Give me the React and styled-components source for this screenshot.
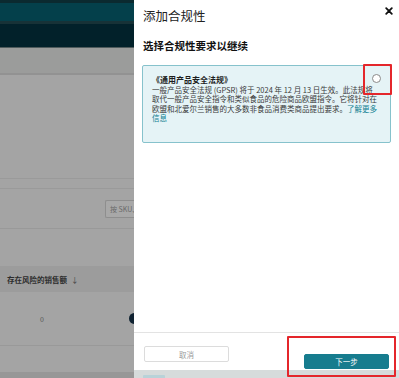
import React from 'react';
import styled, { createGlobalStyle } from 'styled-components';

const GlobalStyle = createGlobalStyle`
  html, body {
    margin: 0;
    padding: 0;
    background: #a4a4a4;
  }
  body {
    font-family: "Noto Sans CJK SC", "Noto Sans", sans-serif;
    -webkit-font-smoothing: antialiased;
  }
`;

const Page = styled.div`
  display: grid;
  grid-template-columns: 134px 1fr;
  width: 399px;
  height: 378px;
  overflow: hidden;
`;

// dimmed page behind the drawer
const Backdrop = styled.div`
  display: flex;
  flex-direction: column;
  overflow: hidden;
  background: #a4a4a4;
`;

const Band = styled.div`
  flex: none;
  height: ${p => p.h}px;
  background: ${p => p.bg || '#a4a4a4'};
  border-bottom: ${p => (p.line ? `${p.lineW || 1}px solid ${p.line}` : 'none')};
`;

const SearchRow = styled.div`
  flex: none;
  height: 39px;
  display: flex;
  align-items: center;
  padding-left: 105px;
  border-bottom: 1px solid #999;
`;

const SearchBox = styled.div`
  flex: none;
  width: 29px;
  height: 16px;
  border: 1px solid #8e8e8e;
  border-right: none;
  border-radius: 2px 0 0 2px;
  background: #a8a8a8;
  font-size: 7px;
  line-height: 16px;
  color: #6a6a6a;
  padding-left: 4px;
  white-space: nowrap;
  overflow: hidden;
`;

const TableHead = styled.div`
  flex: none;
  height: 26px;
  display: flex;
  align-items: center;
  padding-left: 7px;
  background: #9c9c9c;
  font-size: 7.5px;
  font-weight: 700;
  color: #2c2c2c;
  white-space: nowrap;
`;

const SortArrow = styled.span`
  margin-left: 4px;
  font-weight: 400;
  color: #444;
`;

const TableRow = styled.div`
  flex: none;
  height: 53px;
  display: flex;
  align-items: center;
  justify-content: space-between;
  padding-left: 40px;
  border-bottom: 1px solid #999;
  font-size: 7px;
  color: #555;
`;

const Dot = styled.span`
  width: 11px;
  height: 11px;
  border-radius: 50%;
  background: #0f2231;
  margin-right: -6px;
`;

const Side = styled.div`
  display: flex;
  flex-direction: column;
`;

const Drawer = styled.div`
  height: 370px;
  display: flex;
  flex-direction: column;
  background: #fff;
`;

const DrawerBody = styled.div`
  flex: 1;
  padding: 8px 8px 0 8px;
`;

const Header = styled.div`
  display: flex;
  justify-content: space-between;
  align-items: flex-start;
  padding-left: 1px;
`;

const Title = styled.h2`
  margin: 0;
  font-size: 12.5px;
  line-height: 15px;
  font-weight: 400;
  color: #222;
`;

const CloseButton = styled.button`
  border: none;
  background: none;
  padding: 0;
  margin: 0;
  width: 8px;
  height: 8px;
  margin-top: -1px;
  margin-right: -2px;
  display: flex;
  cursor: pointer;
`;

const Subtitle = styled.h3`
  margin: 16px 0 0 1px;
  font-size: 10.5px;
  line-height: 13px;
  font-weight: 700;
  color: #111;
`;

const Card = styled.div`
  margin-top: 13px;
  min-height: 78px;
  box-sizing: border-box;
  display: grid;
  grid-template-columns: 1fr auto;
  grid-template-areas:
    'title radio'
    'body body';
  align-content: start;
  padding: 9px 9px 8px 9px;
  background: #e5f3f6;
  border: 1px solid #86c2cc;
  border-radius: 2px;
`;

const CardTitle = styled.div`
  grid-area: title;
  font-size: 8px;
  line-height: 10px;
  font-weight: 700;
  color: #1e1e1e;
`;

const CardText = styled.div`
  grid-area: body;
  font-size: 7.5px;
  color: #3a3a3a;
  white-space: nowrap;
`;

const TextLine = styled.div`
  height: 9.4px;
  line-height: 9.4px;
`;

const Link = styled.a`
  display: inline-block;
  height: 9.4px;
  line-height: 9.4px;
  color: #0f7f92;
  text-decoration: none;
`;

const Annotated = styled.div`
  position: relative;
  &::after {
    content: '';
    position: absolute;
    top: ${p => p.t}px;
    right: ${p => p.r}px;
    bottom: ${p => p.b}px;
    left: ${p => p.l}px;
    border: 2px solid #e4262b;
    border-radius: 1px;
    pointer-events: none;
  }
`;

const RadioSlot = styled(Annotated)`
  grid-area: radio;
  margin-top: -1.5px;
  margin-right: 0.5px;
`;

const Radio = styled.span`
  display: block;
  width: 9px;
  height: 9px;
  box-sizing: border-box;
  border-radius: 50%;
  border: 1px solid #8a8a8a;
  background: #fff;
`;

const Footer = styled.div`
  flex: none;
  display: flex;
  justify-content: space-between;
  align-items: flex-start;
  height: 38px;
  box-sizing: border-box;
  padding: 13px 10px 0 10px;
  border-top: 1px solid #e3e3e3;
`;

const Button = styled.button`
  width: 85px;
  height: ${p => (p.primary ? 15 : 16)}px;
  margin-top: ${p => (p.primary ? 1 : 0)}px;
  padding: 0;
  box-sizing: border-box;
  border-radius: 2px;
  border: 1px solid ${p => (p.primary ? '#167c8e' : '#dcdcdc')};
  background: ${p => (p.primary ? '#167c8e' : '#fff')};
  color: ${p => (p.primary ? '#fff' : '#9a9a9a')};
  font-family: inherit;
  font-size: 7.5px;
  line-height: 13px;
  cursor: pointer;
`;

const PageStrip = styled.div`
  flex: none;
  height: 8px;
  background: #d6dbdb;
  padding: 5px 0 0 9px;
  box-sizing: border-box;
  overflow: hidden;
`;

const StripMark = styled.span`
  display: block;
  width: 22px;
  height: 4px;
  border-radius: 1px;
  background: #b9d2d8;
`;

export default function App() {
  return (
    <>
      <GlobalStyle />
      <Page>
        <Backdrop>
          <Band h={3} bg="#0b2a30" />
          <Band h={18} bg="#04404b" />
          <Band h={3} bg="#173237" />
          <Band h={23} bg="#02212a" line="#4f5b5c" />
          <Band h={25} bg="#9b9c9b" line="#929292" lineW={2} />
          <Band h={103} line="#9a9a9a" />
          <Band h={9} line="#9a9a9a" />
          <SearchRow>
            <SearchBox>按 SKU、</SearchBox>
          </SearchRow>
          <Band h={37} />
          <TableHead>
            存在风险的销售额<SortArrow>↓</SortArrow>
          </TableHead>
          <TableRow>
            <span>0</span>
            <Dot />
          </TableRow>
          <Band h={26} />
          <Band h={10} bg="#979797" />
        </Backdrop>

        <Side>
          <Drawer>
            <DrawerBody>
              <Header>
                <Title>添加合规性</Title>
                <CloseButton aria-label="关闭">
                  <svg width="8" height="8" viewBox="0 0 8 8">
                    <path d="M1.2 1.2 6.8 6.8M6.8 1.2 1.2 6.8" stroke="#111" strokeWidth="1.8" strokeLinecap="round" />
                  </svg>
                </CloseButton>
              </Header>
              <Subtitle>选择合规性要求以继续</Subtitle>
              <Card>
                <CardTitle>《通用产品安全法规》</CardTitle>
                <RadioSlot t={-10} r={-11} b={-10} l={-9}>
                  <Radio />
                </RadioSlot>
                <CardText>
                  <TextLine>一般产品安全法规 (GPSR) 将于 2024 年 12 月 13 日生效。此法规将</TextLine>
                  <TextLine>取代一般产品安全指令和类似食品的危险商品欧盟指令。它将针对在</TextLine>
                  <TextLine>
                    欧盟和北爱尔兰销售的大多数非食品消费类商品提出要求。<Link href="#">了解更多</Link>
                  </TextLine>
                  <TextLine>
                    <Link href="#">信息</Link>
                  </TextLine>
                </CardText>
              </Card>
            </DrawerBody>
            <Footer>
              <Button>取消</Button>
              <Annotated t={-10} r={-7} b={-7} l={-17}>
                <Button primary>下一步</Button>
              </Annotated>
            </Footer>
          </Drawer>
          <PageStrip>
            <StripMark />
          </PageStrip>
        </Side>
      </Page>
    </>
  );
}
